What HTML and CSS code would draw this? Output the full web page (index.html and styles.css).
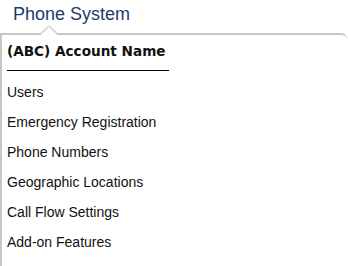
FILE: index.html
```html
<!DOCTYPE html>
<html>
<head>
<meta charset="utf-8">
<link rel="stylesheet" href="styles.css">
</head>
<body>
<div class="header">Phone System</div>
<div class="panel">
  <span class="caret"></span>
  <div class="account">(ABC) Account Name</div>
  <ul class="menu">
    <li>Users</li>
    <li>Emergency Registration</li>
    <li>Phone Numbers</li>
    <li>Geographic Locations</li>
    <li>Call Flow Settings</li>
    <li>Add-on Features</li>
  </ul>
</div>
</body>
</html>
```
FILE: styles.css
```css
html, body {
  margin: 0;
  padding: 0;
  background: #fff;
  width: 349px;
  height: 266px;
  overflow: hidden;
}
.header {
  font-family: "Liberation Sans", Arial, sans-serif;
  font-size: 18px;
  color: #1c3c6c;
  height: 33px;
  line-height: 28px;
  padding-left: 13px;
  box-sizing: border-box;
}
.panel {
  position: relative;
  border-top: 2px solid #c6c6c6;
  border-left: 2px solid #c6c6c6;
  border-top-right-radius: 6px;
  margin-right: 2px;
  height: 240px;
  padding-left: 5px;
}
.caret {
  position: absolute;
  left: 37px;
  top: -10px;
  width: 0;
  height: 0;
  border-left: 10px solid transparent;
  border-right: 10px solid transparent;
  border-bottom: 9px solid #d6d6d6;
}
.caret::after {
  content: "";
  position: absolute;
  left: -8px;
  top: 2px;
  border-left: 8px solid transparent;
  border-right: 8px solid transparent;
  border-bottom: 8px solid #fff;
}
.account {
  font-family: "DejaVu Sans", Verdana, sans-serif;
  font-weight: bold;
  font-size: 13.6px;
  white-space: nowrap;
  color: #111;
  padding-top: 6px;
  width: 162px;
  line-height: 20px;
  padding-bottom: 9px;
  border-bottom: 1px solid #000;
}
.menu {
  list-style: none;
  margin: 0;
  padding: 6px 0 0 0;
  font-family: "Liberation Sans", Arial, sans-serif;
  font-size: 14px;
  color: #111;
}
.menu li {
  height: 30px;
  line-height: 30px;
}
```
